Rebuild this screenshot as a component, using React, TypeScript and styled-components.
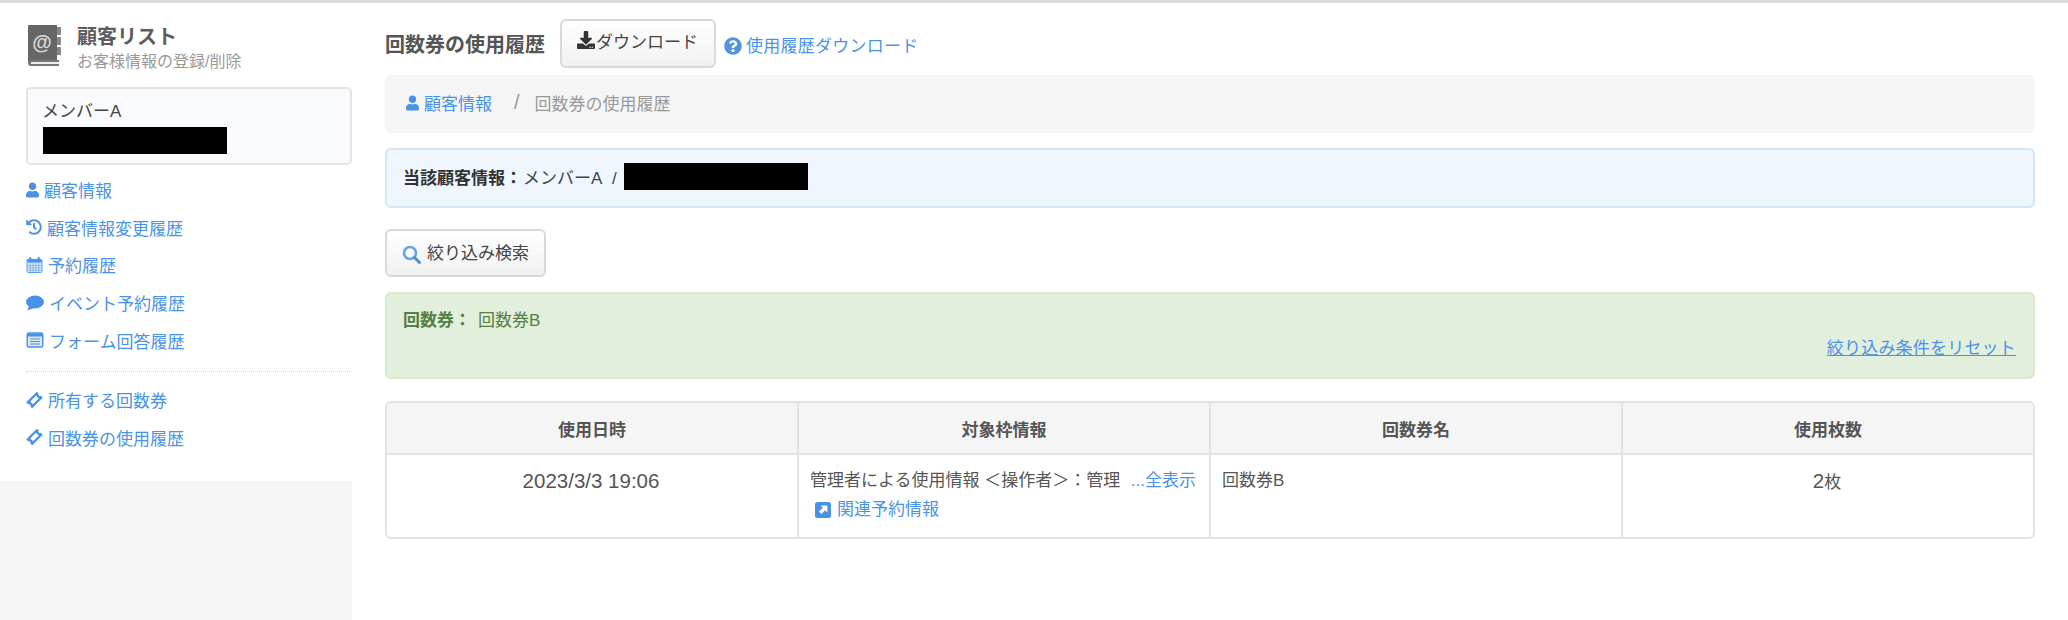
import React from "react";
import styled, { createGlobalStyle } from "styled-components";
import { FaDownload, FaHistory, FaQuestionCircle, FaUser } from "react-icons/fa";

const GlobalStyle = createGlobalStyle`
  html, body {
    margin: 0;
    padding: 0;
    background: #fff;
    overflow: hidden;
  }
  body {
    font-family: "Liberation Sans", "Noto Sans CJK JP", sans-serif;
    font-size: 17px;
    color: #555;
  }
  * {
    box-sizing: border-box;
  }
`;

const BLUE = "#4a92e8";

const Page = styled.div`
  display: flex;
  width: 2068px;
  height: 620px;
  border-top: 3px solid #dcdcdc;
`;

const Sidebar = styled.aside`
  width: 352px;
  flex: none;
  display: flex;
  flex-direction: column;
  background: #f5f5f5;
`;

const SidebarInner = styled.div`
  height: 478px;
  background: #fff;
  padding: 22px 0 0 26px;
`;

const SidebarHead = styled.div`
  display: flex;
  gap: 16px;
  height: 62px;
`;

const SidebarTitle = styled.div`
  margin-top: -1px;
  font-size: 20px;
  font-weight: 700;
  line-height: 26px;
  color: #5c5c5c;
`;

const SidebarSub = styled.div`
  font-size: 16px;
  line-height: 24px;
  color: #999;
`;

const MemberBox = styled.div`
  height: 78px;
  border: 2px solid #e3e3e3;
  border-radius: 5px;
  background: #f9fafd;
  padding: 11px 14px;
  font-size: 17px;
  line-height: 24px;
  color: #444;
`;

const Redacted = styled.span<{ $w: number }>`
  display: block;
  width: ${(p) => p.$w}px;
  height: 27px;
  margin: 3px 0 0 1px;
  background: #000;
`;

const InlineRedacted = styled(Redacted)`
  margin: 0;
`;

const SideNav = styled.nav`
  display: flex;
  flex-direction: column;
  padding-top: 6px;
`;

const SideLink = styled.a<{ $iconWidth: number }>`
  display: flex;
  align-items: center;
  height: 37.6px;
  color: ${BLUE};
  font-size: 17px;
  svg {
    flex: none;
    width: ${(p) => p.$iconWidth}px;
    height: 16px;
    margin-right: 5px;
  }
`;

const SideDivider = styled.div`
  margin: 12px 0 9px;
  border-top: 1px dotted #d5d5d5;
`;

const Main = styled.main`
  width: 1650px;
  margin-left: 33px;
  display: flex;
  flex-direction: column;
`;

const TitleRow = styled.div`
  display: flex;
  align-items: center;
  height: 54px;
  margin-top: 13px;
`;

const PageTitle = styled.h1`
  margin: 0 15px 0 0;
  font-size: 20px;
  font-weight: 700;
  color: #555;
`;

const Button = styled.button`
  display: inline-flex;
  align-items: center;
  height: 49px;
  padding: 0 16px;
  border: 2px solid #d9d9d9;
  border-radius: 6px;
  background: linear-gradient(#fff, #f1f1f1);
  font: inherit;
  font-size: 17px;
  color: #444;
`;

const DownloadButton = styled(Button)`
  width: 156px;
  padding: 0 0 6px 15px;
  svg {
    width: 18px;
    height: 18px;
    color: #333;
    margin-right: 1px;
  }
`;

const HelpLink = styled.a`
  display: inline-flex;
  align-items: center;
  gap: 4px;
  margin: 2px 0 0 8px;
  color: ${BLUE};
  font-size: 17px;
  letter-spacing: 0.25px;
  svg {
    width: 18px;
    height: 18px;
    margin-top: 3px;
    color: #5192db;
  }
`;

const Breadcrumb = styled.div`
  display: flex;
  align-items: center;
  height: 58px;
  margin-top: 5px;
  padding: 0 22px 3px 21px;
  border-radius: 6px;
  background: #f5f5f5;
  color: #999;
`;

const CrumbLink = styled.a`
  display: inline-flex;
  align-items: center;
  gap: 5px;
  color: ${BLUE};
  svg {
    width: 13px;
    height: 16px;
  }
`;

const CrumbSep = styled.span`
  margin: 0 15px 0 22px;
  font-size: 20px;
`;

const InfoBar = styled.div`
  display: flex;
  align-items: center;
  gap: 7px;
  height: 60px;
  margin-top: 15px;
  padding: 0 16px 3px;
  border: 2px solid #d3e6f8;
  border-radius: 6px;
  background: #eff6fd;
  color: #444;
`;

const InfoText = styled.span`
  word-spacing: 6px;
`;

const InfoLabel = styled.strong`
  font-weight: 700;
  color: #333;
  margin-right: 1px;
`;

const SearchButton = styled(Button)`
  align-self: flex-start;
  width: 161px;
  height: 48px;
  margin-top: 21px;
  padding: 0 0 3px 15px;
  svg {
    width: 20px;
    height: 20px;
    margin: 7px 5px 0 0;
  }
`;

const FilterBox = styled.div`
  height: 87px;
  margin-top: 15px;
  padding: 15px 16px 0;
  border: 2px solid #d9e8cf;
  border-radius: 6px;
  background: #e2efdc;
  color: #558045;
  line-height: 24px;
`;

const FilterLabel = styled.strong`
  font-weight: 700;
  margin-right: 7px;
`;

const ResetRow = styled.div`
  display: flex;
  justify-content: flex-end;
  padding-right: 1px;
  margin-top: 4px;
`;

const ResetLink = styled.a`
  color: ${BLUE};
  text-decoration: underline;
  letter-spacing: 0.2px;
`;

const Table = styled.table`
  width: 1650px;
  margin-top: 22px;
  table-layout: fixed;
  border-collapse: separate;
  border-spacing: 0;
  border: 2px solid #e3e3e3;
  border-radius: 6px;
  overflow: hidden;
`;

const Th = styled.th`
  height: 52px;
  padding: 0;
  background: #f5f5f5;
  border-left: 2px solid #e3e3e3;
  border-bottom: 2px solid #e3e3e3;
  font-size: 17px;
  font-weight: 700;
  color: #555;
  &:first-child {
    width: 410px;
    border-left: none;
  }
`;

const Td = styled.td<{ $center?: boolean }>`
  height: 82px;
  padding: 13px 13px 0 11px;
  vertical-align: top;
  border-left: 2px solid #e3e3e3;
  font-size: 17px;
  line-height: 25px;
  color: #555;
  text-align: ${(p) => (p.$center ? "center" : "left")};
  &:first-child {
    border-left: none;
  }
`;

const Digits = styled.span`
  font-size: 20.5px;
`;

const CellLine = styled.div`
  display: flex;
  justify-content: space-between;
  white-space: nowrap;
`;

const BlueText = styled.a`
  color: ${BLUE};
`;

const RelatedLink = styled.a`
  display: inline-flex;
  align-items: center;
  gap: 6px;
  margin: 4px 0 0 5px;
  color: ${BLUE};
  svg {
    width: 16px;
    height: 16px;
  }
`;

function AddressBookIcon() {
  return (
    <svg width="34" height="41" viewBox="0 0 34 41" style={{ flex: "none", marginLeft: 1 }}>
      <path d="M2 0h28v36H4a3 3 0 0 0-3 2V1a1 1 0 0 1 1-1z" fill="#666" />
      <path d="M1 37a3 3 0 0 1 3-2h28v6H4a3 3 0 0 1-3-3z" fill="#777" />
      <path d="M4 37h28v2H4z" fill="#eee" />
      <path d="M30 2h4v8h-4zM30 12h4v8h-4zM30 22h4v8h-4z" fill="#888" />
      <text
        x="15"
        y="24"
        fontSize="20"
        fontWeight="700"
        fontFamily="Liberation Sans"
        fill="#d8d8d8"
        textAnchor="middle"
      >
        @
      </text>
    </svg>
  );
}

function CalendarIcon() {
  return (
    <svg viewBox="0 0 17 17" fill="none">
      <rect x="0.5" y="2.5" width="16" height="14" rx="1.5" fill="#e6f0fc" stroke={BLUE} />
      <path d="M1 2.5h15V6H1z" fill={BLUE} />
      <path d="M4 0.5v3M13 0.5v3" stroke={BLUE} strokeWidth="2" strokeLinecap="round" />
      <path
        d="M1 9h15M1 11.5h15M1 14h15M4 6v10M7 6v10M10 6v10M13 6v10"
        stroke={BLUE}
        strokeWidth="0.6"
      />
    </svg>
  );
}

function BubbleIcon() {
  return (
    <svg viewBox="0 0 18 16">
      <ellipse cx="9" cy="7" rx="9" ry="6.5" fill={BLUE} />
      <path d="M3 11l-1.5 4.5L8 13z" fill={BLUE} />
    </svg>
  );
}

function FormIcon() {
  return (
    <svg viewBox="0 0 17 16" fill="none">
      <rect x="0.75" y="1" width="15.5" height="14" rx="1.5" fill="#dbe9fb" stroke={BLUE} strokeWidth="1.5" />
      <path d="M1 1.5h15V4.5H1z" fill={BLUE} />
      <path d="M3.5 7h10M3.5 9.5h10M3.5 12h10" stroke={BLUE} strokeWidth="1.2" />
    </svg>
  );
}

function TicketIcon() {
  return (
    <svg viewBox="0 0 17 16" fill="none">
      <g transform="rotate(-45 8.5 8)">
        <path
          d="M1 3.8h15v2.6a1.7 1.7 0 0 0 0 3.2v2.6H1V9.6a1.7 1.7 0 0 0 0-3.2z"
          fill={BLUE}
        />
        <rect x="4.5" y="6" width="8" height="4" fill="#fff" />
      </g>
    </svg>
  );
}

function SearchIcon() {
  return (
    <svg viewBox="0 0 20 20" fill="none">
      <circle cx="8" cy="8" r="6" stroke="#66a6e4" strokeWidth="2.6" fill="#f6f9fd" />
      <path d="M12.5 12.5l5 5" stroke="#4f8fd0" strokeWidth="3" strokeLinecap="round" />
    </svg>
  );
}

function RelatedIcon() {
  return (
    <svg viewBox="0 0 16 16">
      <rect width="16" height="16" rx="2.5" fill={BLUE} />
      <path d="M5.6 3.6h6.8v6.8l-2.2-2.2-3.8 3.9-2.5-2.5 3.9-3.8z" fill="#fff" />
    </svg>
  );
}

const links = [
  { icon: <FaUser />, width: 13, label: "顧客情報" },
  { icon: <FaHistory />, width: 16, label: "顧客情報変更履歴" },
  { icon: <CalendarIcon />, width: 17, label: "予約履歴" },
  { icon: <BubbleIcon />, width: 18, label: "イベント予約履歴" },
  { icon: <FormIcon />, width: 18, label: "フォーム回答履歴" },
];

const ticketLinks = ["所有する回数券", "回数券の使用履歴"];

export default function App() {
  return (
    <Page>
      <GlobalStyle />
      <Sidebar>
        <SidebarInner>
          <SidebarHead>
            <AddressBookIcon />
            <div>
              <SidebarTitle>顧客リスト</SidebarTitle>
              <SidebarSub>お客様情報の登録/削除</SidebarSub>
            </div>
          </SidebarHead>
          <MemberBox>
            メンバーA
            <Redacted $w={184} />
          </MemberBox>
          <SideNav>
            {links.map((l) => (
              <SideLink key={l.label} $iconWidth={l.width}>
                {l.icon}
                {l.label}
              </SideLink>
            ))}
            <SideDivider />
            {ticketLinks.map((label) => (
              <SideLink key={label} $iconWidth={17}>
                <TicketIcon />
                {label}
              </SideLink>
            ))}
          </SideNav>
        </SidebarInner>
      </Sidebar>
      <Main>
        <TitleRow>
          <PageTitle>回数券の使用履歴</PageTitle>
          <DownloadButton>
            <FaDownload />
            ダウンロード
          </DownloadButton>
          <HelpLink>
            <FaQuestionCircle />
            使用履歴ダウンロード
          </HelpLink>
        </TitleRow>
        <Breadcrumb>
          <CrumbLink>
            <FaUser />
            顧客情報
          </CrumbLink>
          <CrumbSep>/</CrumbSep>
          回数券の使用履歴
        </Breadcrumb>
        <InfoBar>
          <InfoText>
            <InfoLabel>当該顧客情報：</InfoLabel>メンバーA /
          </InfoText>
          <InlineRedacted $w={184} />
        </InfoBar>
        <SearchButton>
          <SearchIcon />
          絞り込み検索
        </SearchButton>
        <FilterBox>
          <FilterLabel>回数券：</FilterLabel>回数券B
          <ResetRow>
            <ResetLink>絞り込み条件をリセット</ResetLink>
          </ResetRow>
        </FilterBox>
        <Table>
          <thead>
            <tr>
              <Th>使用日時</Th>
              <Th>対象枠情報</Th>
              <Th>回数券名</Th>
              <Th>使用枚数</Th>
            </tr>
          </thead>
          <tbody>
            <tr>
              <Td $center>
                <Digits>2023/3/3 19:06</Digits>
              </Td>
              <Td>
                <CellLine>
                  <span>管理者による使用情報 ＜操作者＞：管理</span>
                  <BlueText>...全表示</BlueText>
                </CellLine>
                <RelatedLink>
                  <RelatedIcon />
                  関連予約情報
                </RelatedLink>
              </Td>
              <Td>回数券B</Td>
              <Td $center>
                <Digits>2</Digits>枚
              </Td>
            </tr>
          </tbody>
        </Table>
      </Main>
    </Page>
  );
}
